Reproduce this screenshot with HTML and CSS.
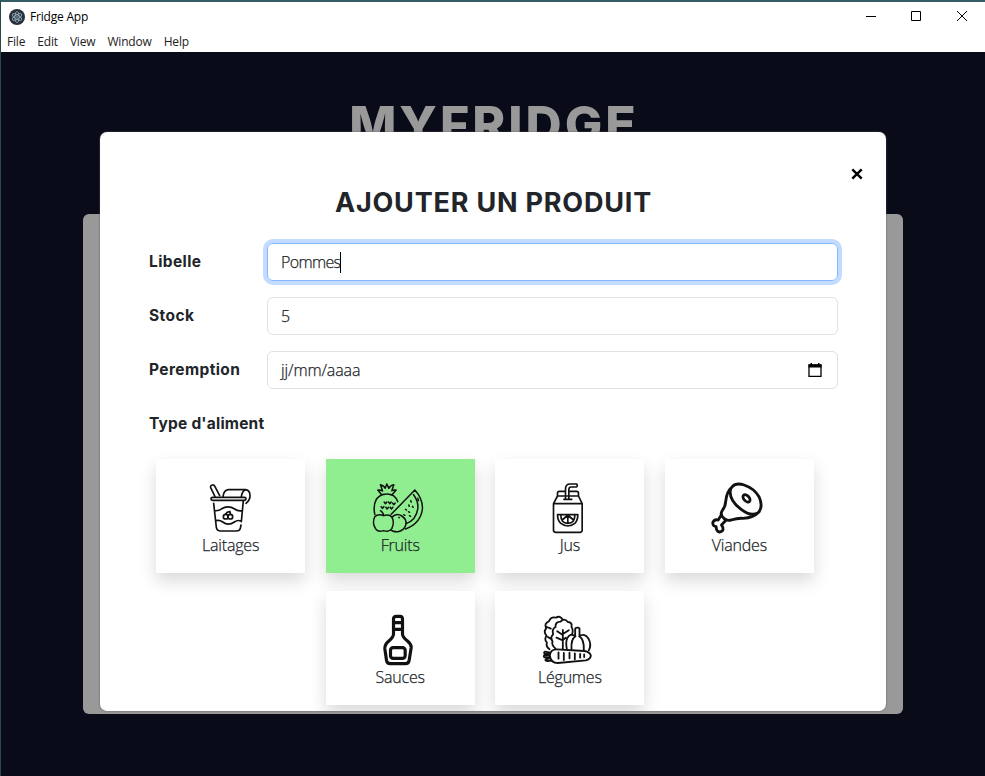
FILE: index.html
```html
<!DOCTYPE html>
<html lang="fr">
<head>
<meta charset="utf-8">
<title>Fridge App</title>
<link rel="stylesheet" href="styles.css">
</head>
<body>
<div class="window">
  <header class="chrome">
    <div class="titlebar">
      <svg class="app-icon" viewBox="0 0 16 16"><circle cx="8" cy="8" r="8" fill="#2b2e3b"/><g fill="none" stroke="#9fc4cf" stroke-width=".7"><ellipse cx="8" cy="8" rx="5.4" ry="2.1" transform="rotate(30 8 8)"/><ellipse cx="8" cy="8" rx="5.4" ry="2.1" transform="rotate(90 8 8)"/><ellipse cx="8" cy="8" rx="5.4" ry="2.1" transform="rotate(150 8 8)"/></g><circle cx="8" cy="8" r=".8" fill="#9fc4cf"/></svg>
      <span class="app-name">Fridge App</span>
      <div class="controls">
        <svg viewBox="0 0 12 12"><path d="M1 5.5h10"/></svg>
        <svg viewBox="0 0 12 12"><path d="M.5 .5h9v9h-9z"/></svg>
        <svg viewBox="0 0 12 12"><path d="M1 0l10 10M11 0L1 10"/></svg>
      </div>
    </div>
    <nav class="menubar"><span>File</span><span>Edit</span><span>View</span><span>Window</span><span>Help</span></nav>
  </header>
  <main class="page">
    <h1 class="brand">MYFRIDGE</h1>
    <div class="panel"></div>
    <section class="modal">
      <button class="close" aria-label="Fermer"><svg viewBox="0 0 12 12"><path d="M1.3 1.3l9.4 9.4M10.7 1.3L1.3 10.7"/></svg></button>
      <h2 class="title">AJOUTER UN PRODUIT</h2>
      <div class="row"><span class="label">Libelle</span><div class="field focus"><span class="typed">Pommes</span><i class="caret"></i></div></div>
      <div class="row"><span class="label">Stock</span><div class="field"><span>5</span></div></div>
      <div class="row"><span class="label">Peremption</span><div class="field"><span>jj/mm/aaaa</span>
        <svg class="cal" viewBox="0 0 14 14"><path d="M1 2h12v11.500h-12z" fill="none" stroke="#000" stroke-width="1.300"/><path d="M.5 1.500h13v3H.5zM2.500 0h1.500v2H2.500zM10 0h1.500v2H10z"/></svg></div></div>
      <div class="label types-label">Type d'aliment</div>
      <div class="cards">
        <div class="card">
          <svg class="icon" viewBox="33 24 150 150" stroke-width="5">
            <rect x="48" y="67" width="105" height="9" rx="4.500"/>
            <path d="M60 65L47 38Q45 31 52 30Q57 29 60 35L74 62M84 65Q86 46 100 44H151Q164 45 165 60Q166 75 153 85M151 44Q141 49 139 65"/>
            <path d="M56 85L64 157Q66 168 77 168H124Q134 168 136 160L138 150M145 77L139 140M59 107Q73 108 79 102Q99 89 119 102Q128 109 141 107M62 137Q74 134 83 141Q100 154 118 141Q128 134 138 138"/>
            <circle cx="92" cy="125" r="7"/><circle cx="106" cy="125" r="7"/><path d="M92 117Q97 109 105 110Q106 115 106 118"/>
          </svg><span>Laitages</span>
        </div>
        <div class="card selected">
          <svg class="icon" viewBox="45.500 24 150 150" stroke-width="4.500">
            <path d="M66 60L54 45Q64 45 68 48L62 29Q73 32 76 40L81 27L87 40Q91 31 102 29L96 47Q101 44 109 45L96 60M70 59Q81 54 95 60M45 119Q39 91 50 72Q62 57 80 57Q105 56 114 80"/>
            <path d="M165 45L94 118M165 45Q188 70 188 99Q184 145 137 162M161 59Q176 78 174 101Q169 135 139 146M174 70L176 77"/>
            <path d="M71 122Q55 115 45 125Q36 143 47 161Q54 173 71 167Q88 173 96 161Q105 141 96 126Q88 116 71 122ZM71 122Q71 113 62 107M99 124Q112 114 126 123Q142 133 138 149Q133 166 115 170Q99 171 93 164"/>
            <path d="M73 81l4 5 4-5M86 81l4 5 4-5M98 84l4 5 4-5M64 95l4 5 4-5M78 97l4 5 4-5M91 97l4 5 4-5M153 77l1 4M147 90l1 4M158 94l2 3M137 103l3 2M146 110l3 2M132 119l3 2M149 122l3 2M117 127l1 1"/>
          </svg><span>Fruits</span>
        </div>
        <div class="card">
          <svg class="icon" viewBox="46.500 24 150 150" stroke-width="5">
            <path d="M72 86V166Q72 172 79 172H151Q158 172 158 166V86ZM72 86L84 63H147L158 86M84 62V54Q84 49 90 49H106M121 49H141Q147 49 147 55V62M103 73H127M108 71V42Q108 27 122 27H141Q146 31 141 36H124Q119 36 118 43V71"/>
            <path d="M84 119H145Q145 136 136 145Q115 161 94 145Q84 136 84 119ZM94 121Q94 145 115 145Q136 145 136 121M115 123V144M112 123L98 135M118 123L132 135"/>
          </svg><span>Jus</span>
        </div>
        <div class="card">
          <svg class="icon" viewBox="42.500 24 150 150" stroke-width="8.500">
            <path d="M97 35Q109 22 133 30Q163 40 178 66Q191 95 175 113Q154 126 124 103Q90 78 91 49Q92 40 97 35ZM95 38Q81 50 78 77Q77 95 67 107Q61 117 67 124L73 131Q81 138 94 135Q113 129 130 130Q161 128 178 110"/>
            <ellipse cx="140" cy="70" rx="8" ry="13" transform="rotate(-43 140 70)"/>
            <path d="M65 119L55 135Q44 132 39 142Q37 153 49 155Q49 169 59 171Q72 170 69 157L65 150L79 135"/>
          </svg><span>Viandes</span>
        </div>
        <div class="card">
          <svg class="icon" viewBox="45.500 30 150 150" stroke-width="9.500">
            <path d="M101 88V43Q101 34 109 34H121Q128 34 128 43V88Q129 97 143 108Q155 118 154 128L148 166Q146 176 137 176H91Q82 176 80 166L75 131Q74 119 87 108Q100 97 101 88ZM102 53H127M102 73H127"/>
            <rect x="92" y="128" width="44" height="32" rx="8"/>
          </svg><span>Sauces</span>
        </div>
        <div class="card">
          <svg class="icon" viewBox="45.500 30 150 150" stroke-width="5.500">
            <path d="M59 133Q48 125 51 112Q42 103 50 92Q40 80 49 70Q42 55 57 49Q64 34 78 38Q91 30 99 45M77 131Q64 119 68 109Q60 97 70 88Q65 73 77 66Q76 50 92 50Q103 37 114 51Q128 52 125 66Q131 74 127 88M99 133V75M99 90L82 79M99 87L117 76M99 106L80 98M99 105L108 98M51 66L63 71M54 96L66 103"/>
            <path d="M136 94V71Q137 67 145 68Q150 69 149 74V94M136 94Q121 82 112 100Q107 112 111 131M148 94Q165 83 176 101Q186 119 177 136M137 94Q123 103 125 132M148 94Q163 103 162 134"/>
            <path d="M60 151Q62 132 82 133L164 138Q181 141 183 152Q182 163 168 166L84 174Q62 174 60 151ZM61 143L46 140Q40 142 45 147H59M60 151H43Q40 156 45 157L61 157M61 160L47 163Q46 168 53 168L66 167M86 142V161M102 144V165M119 143V160M135 145V163M151 147V158M163 148V156"/>
          </svg><span>Légumes</span>
        </div>
      </div>
    </section>
  </main>
</div>
</body>
</html>
```
FILE: styles.css
```css
* { box-sizing: border-box; }
body { margin: 0; font-family: "Open Sans", "Noto Sans", sans-serif; color: #212529; overflow: hidden; }
.window { height: 776px; border-top: 2px solid #345d65; border-left: 1px solid #29474e; display: flex; flex-direction: column; background: #0a0b19; }
.chrome { height: 50px; background: #fff; flex: none; color: #000; font-size: 12px; }
.titlebar { height: 29px; display: flex; align-items: center; padding-left: 8px; }
.app-icon { width: 16px; height: 16px; }
.app-name { margin-left: 5px; letter-spacing: -.2px; }
.controls { margin-left: auto; display: flex; gap: 33.500px; padding-right: 17px; }
.controls svg { width: 12px; height: 12px; fill: none; stroke: #000; stroke-width: 1; overflow: visible; }
.menubar { display: flex; gap: 12px; height: 21px; line-height: 21px; padding-left: 6px; color: #222; letter-spacing: -.18px; }
.page { position: relative; flex: 1; display: flex; flex-direction: column; align-items: center; padding: 42px 1px 0 0; }
.brand { margin: 0; height: 120px; color: #999; font: 800 50px/60px Inter, sans-serif; letter-spacing: 3px; text-indent: 3px; white-space: nowrap; }
.panel { width: 820px; height: 500px; background: #999; border-radius: 6px; }
.modal { position: absolute; left: 99px; top: 80px; width: 786px; height: 579px; background: #fff; border-radius: 7px; overflow: hidden; padding: 36px 48px 0 49px; box-shadow: 0 0 2px #555; }
.close { display: block; margin: 0 -25px 0 auto; padding: 0; width: 12px; height: 12px; border: 0; background: none; }
.close svg { display: block; width: 12px; height: 12px; stroke: #000; stroke-width: 2.400; }
.title { margin: 6px 0 23px; text-align: center; font: 700 27px/34px Inter, sans-serif; letter-spacing: .8px; }
.row { display: flex; align-items: center; height: 38px; margin-bottom: 16px; }
.label { width: 118px; font: 700 15.500px/24px Inter, sans-serif; letter-spacing: .2px; white-space: nowrap; }
.row .label { letter-spacing: .4px; }
.field { width: 571px; height: 38px; border: 1px solid #dee2e6; border-radius: 6px; padding: 0 15px 0 13px; display: flex; align-items: center; font-size: 16px; font-weight: 300; letter-spacing: -.1px; -webkit-text-stroke: .25px #212529; }
.typed { letter-spacing: -.65px; }
.focus { border-color: #86b7fe; box-shadow: 0 0 0 4px #c2dbff; }
.caret { width: 1px; height: 21px; background: #000; }
.cal { width: 14px; height: 14px; margin-left: auto; }
.types-label { margin-top: 23px; }
.cards { display: flex; flex-wrap: wrap; justify-content: center; gap: 18px 20.600px; margin: 23px 24px 0 7px; }
.card { width: 149px; height: 114px; padding-top: 24px; display: flex; flex-direction: column; align-items: center; font-size: 16px; font-weight: 300; letter-spacing: -.2px; line-height: 25px; background: #fff; box-shadow: 0 8px 16px rgba(0,0,0,.15); -webkit-text-stroke: .25px #212529; }
.selected { background: #90ee90; }
.icon { width: 50px; height: 50px; flex: none; overflow: visible; fill: none; stroke: #111; stroke-linecap: round; stroke-linejoin: round; }
```
